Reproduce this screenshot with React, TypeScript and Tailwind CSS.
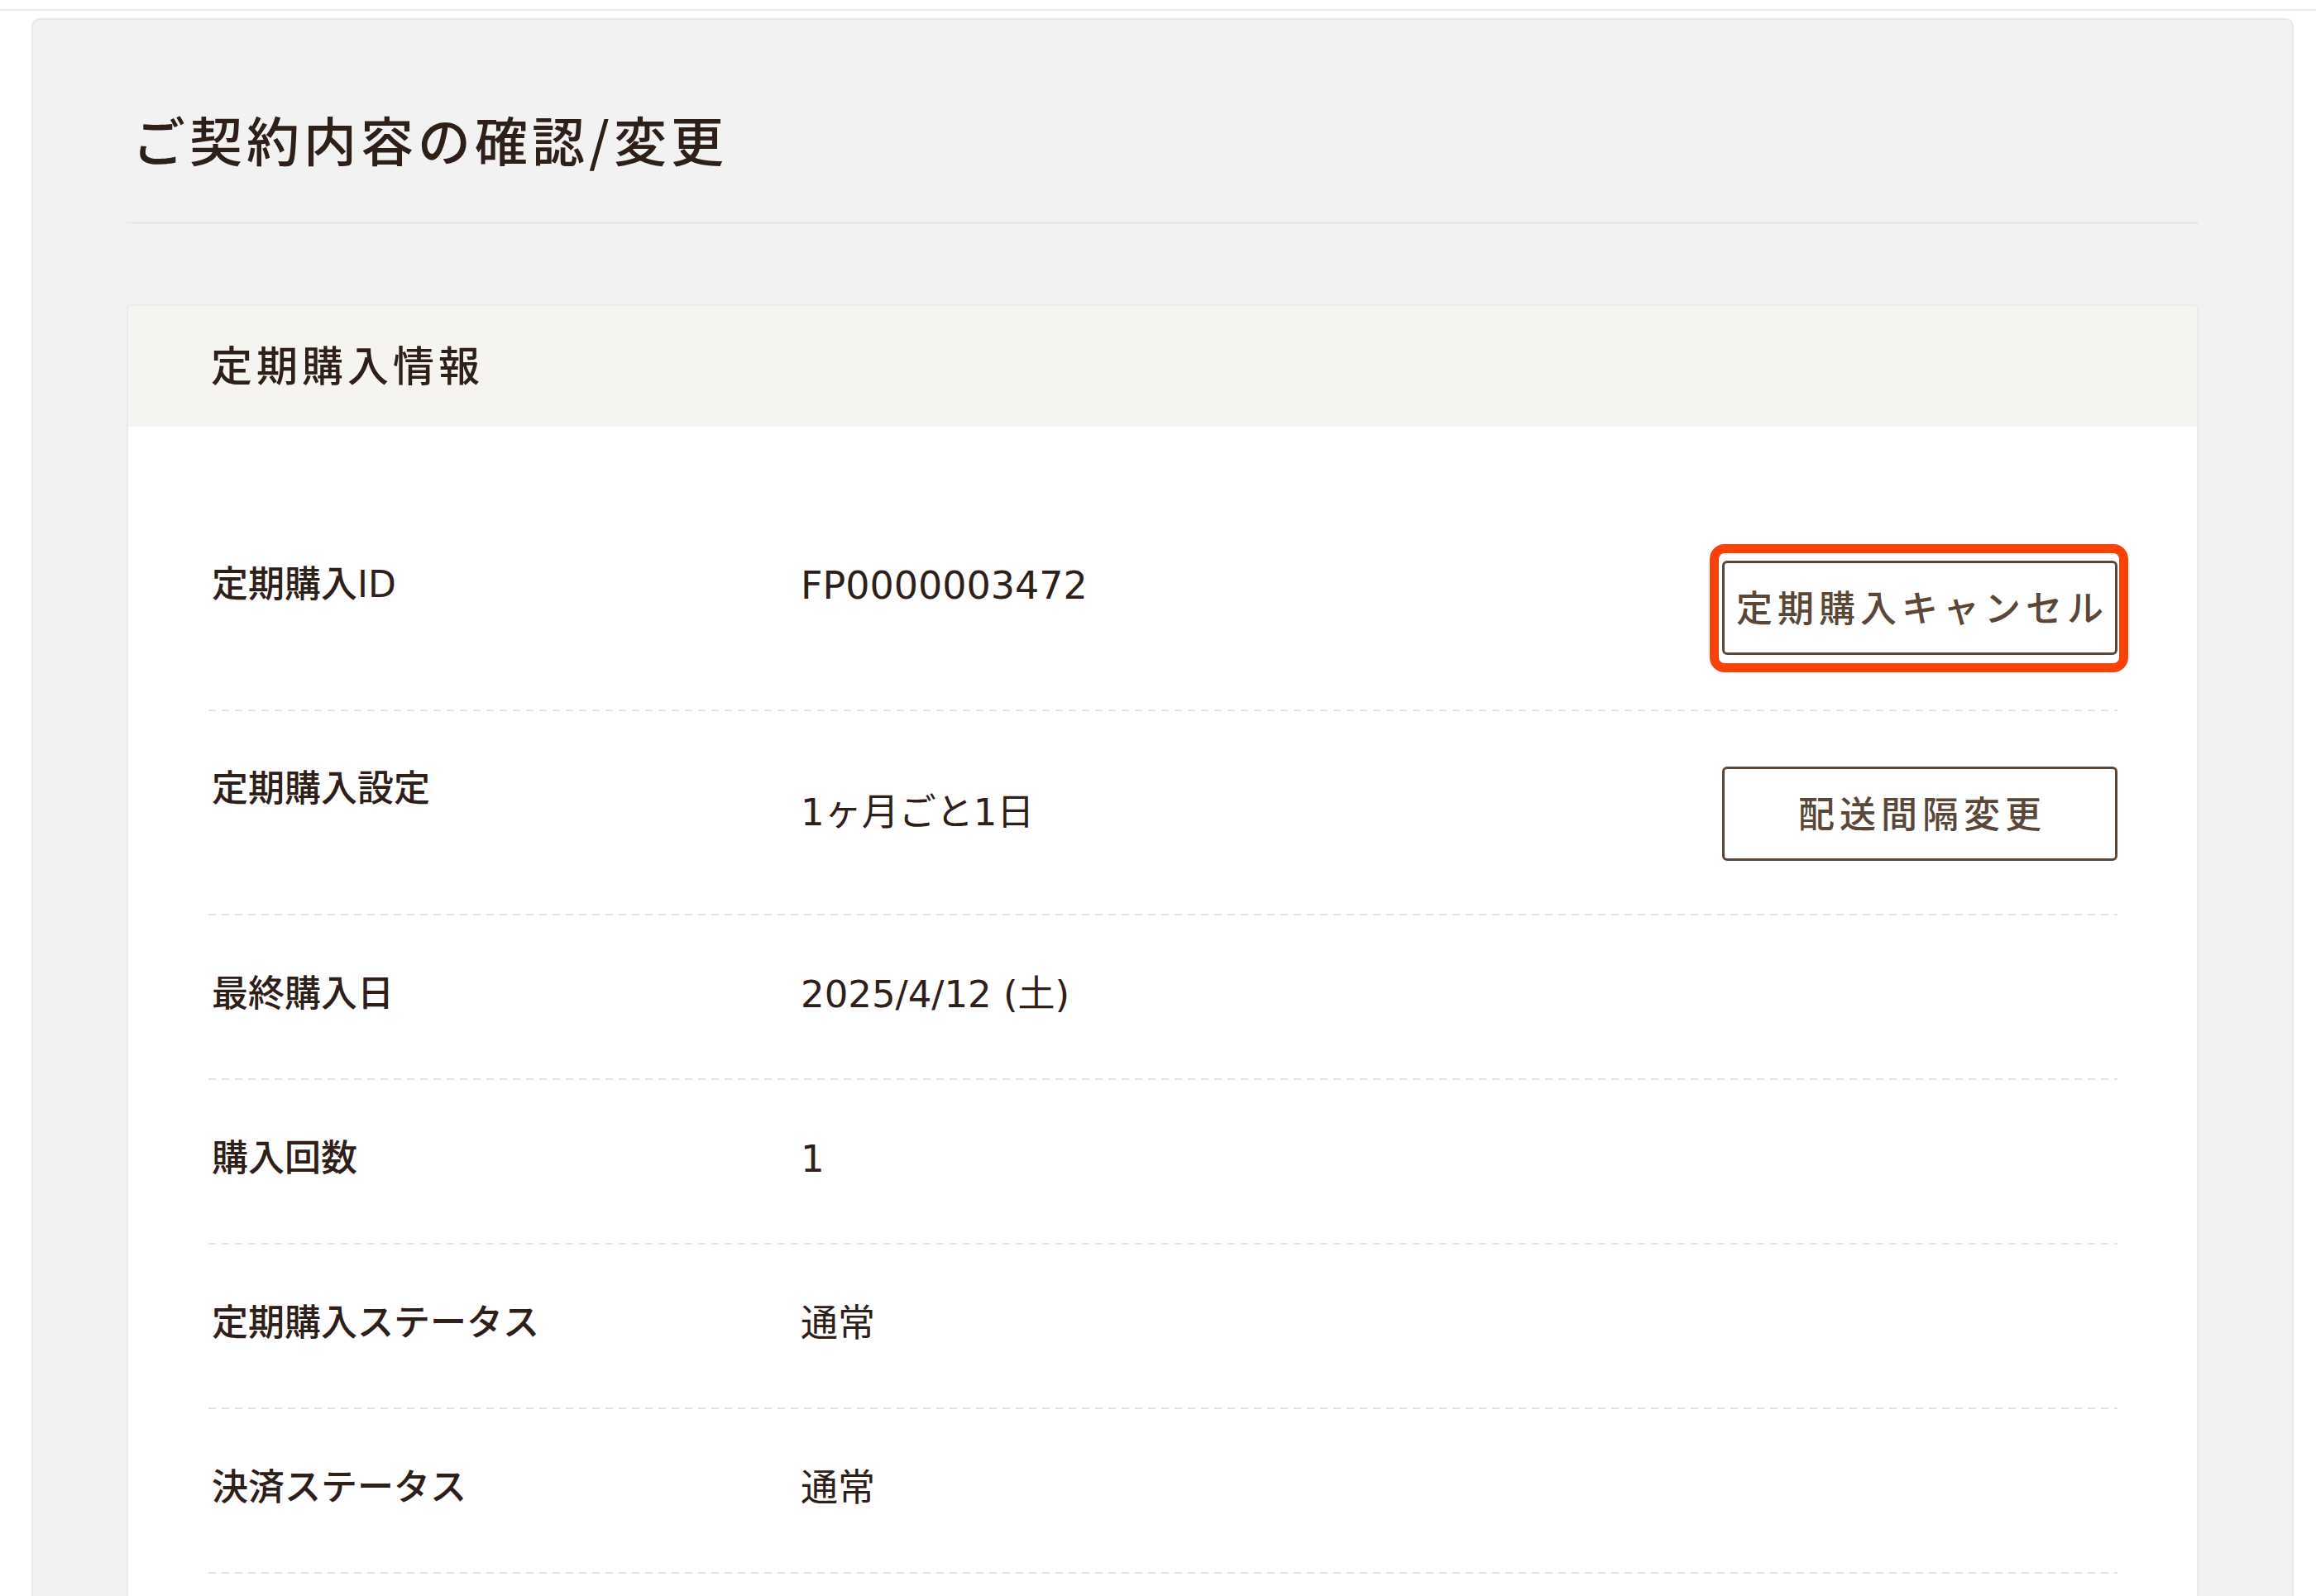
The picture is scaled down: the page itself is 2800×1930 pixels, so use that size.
import React from "react";

const txt = "font-['DejaVu_Sans','Noto_Sans_CJK_JP',sans-serif]";
const jp = "font-['Noto_Sans_CJK_JP',sans-serif]";

function Dash() {
  return (
    <div className="h-[2px] -ml-[4px] bg-[linear-gradient(to_right,#e4e4e4_9px,transparent_9px)] bg-[length:16px_2px] bg-repeat-x" />
  );
}

function Btn({ children, highlight }: { children: React.ReactNode; highlight?: boolean }) {
  return (
    <div className="relative shrink-0">
      {highlight && (
        <div className="absolute -left-[15px] -right-[13px] -top-[20px] -bottom-[21px] rounded-[18px] border-[11px] border-[#f8420c] pointer-events-none" />
      )}
      <button
        className={`${jp} flex h-[114px] w-[478px] items-center justify-center rounded-[6px] border-[3px] border-[#5b4737] bg-white pl-[6px] pb-[5px] text-[44px] font-medium leading-none tracking-[6px] text-[#5b4737]`}
      >
        {children}
      </button>
    </div>
  );
}

function SimpleRow({ label, value }: { label: string; value: string }) {
  return (
    <div>
      <div className="flex items-start pt-[73px] pb-[79px]">
        <div className={`${txt} w-[712px] shrink-0 text-[44px] font-medium leading-none text-[#2e2019]`}>{label}</div>
        <div className={`${txt} text-[45px] leading-none text-[#2e2019]`}>{value}</div>
      </div>
      <Dash />
    </div>
  );
}

export default function App() {
  return (
    <div className="h-[1930px] w-[2800px] overflow-hidden bg-white">
      <div className="mt-[11px] h-[2px] w-full bg-[#e9e9e9]" />
      <div className="ml-[38px] mt-[9px] w-[2735px] rounded-[10px] border-2 border-[#e8e8e8] bg-[#f2f2f2] px-[113px] pt-[111px] pb-[200px]">
        <div className="border-b-[3px] border-[#e9e9e9] pb-[69px] pl-[7px]">
          <h1 className={`${jp} text-[64px] font-medium leading-none tracking-[5px] text-[#2e2019]`}>
            ご契約内容の確認/変更
          </h1>
        </div>

        <div className="mt-[97px] overflow-hidden rounded-[6px] border-2 border-[#ebebeb] bg-white">
          <div className="flex h-[146px] items-center bg-[#f5f4f1] pb-[8px] pl-[100px]">
            <h2 className={`${jp} text-[50px] font-medium leading-none tracking-[5px] text-[#2e2019]`}>
              定期購入情報
            </h2>
          </div>

          <div className="pl-[101px] pr-[96px] pb-[200px]">
            {/* Row 1 */}
            <div>
              <div className="flex items-start pt-[162px] pb-[66px]">
                <div className={`${txt} mt-[7px] w-[712px] shrink-0 text-[44px] font-medium leading-none text-[#2e2019]`}>
                  定期購入ID
                </div>
                <div className={`${txt} mt-[7px] flex-1 text-[46px] leading-none text-[#2e2019]`}>
                  FP0000003472
                </div>
                <Btn highlight>定期購入キャンセル</Btn>
              </div>
              <Dash />
            </div>

            {/* Row 2 */}
            <div>
              <div className="flex items-start pt-[67px] pb-[64px]">
                <div className={`${txt} mt-[5px] w-[712px] shrink-0 text-[44px] font-medium leading-none text-[#2e2019]`}>
                  定期購入設定
                </div>
                <div className={`${txt} flex-1 self-center pb-[4px] text-[45px] leading-none text-[#2e2019]`}>
                  1ヶ月ごと1日
                </div>
                <Btn>配送間隔変更</Btn>
              </div>
              <Dash />
            </div>

            <SimpleRow label="最終購入日" value="2025/4/12 (土)" />
            <SimpleRow label="購入回数" value="1" />
            <SimpleRow label="定期購入ステータス" value="通常" />
            <SimpleRow label="決済ステータス" value="通常" />
          </div>
        </div>
      </div>
    </div>
  );
}
